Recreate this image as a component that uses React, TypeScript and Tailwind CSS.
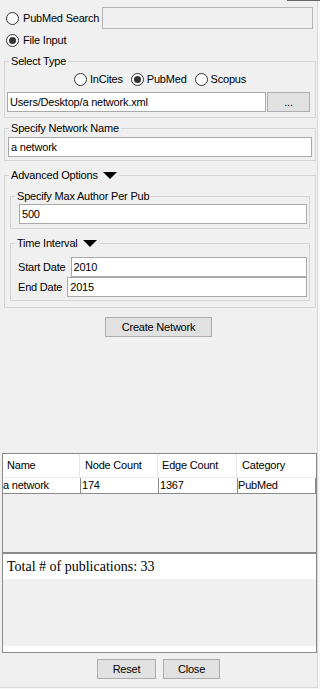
import React from "react";

function Radio({ checked }: { checked?: boolean }) {
  return (
    <span className="flex h-[13px] w-[13px] shrink-0 items-center justify-center rounded-full border border-[#333333] bg-white">
      {checked && <span className="h-[7px] w-[7px] rounded-full bg-[#333333]" />}
    </span>
  );
}

function RadioItem({ label, checked }: { label: string; checked?: boolean }) {
  return (
    <div className="flex items-center gap-[3px]">
      <Radio checked={checked} />
      <span>{label}</span>
    </div>
  );
}

function Tri() {
  return (
    <svg width="14" height="7" viewBox="0 0 14 7" className="shrink-0">
      <path d="M0 0 H14 L7 7 Z" fill="#000" />
    </svg>
  );
}

function Title({ text, tri }: { text: string; tri?: boolean }) {
  return (
    <div className="-mt-[8px] ml-[4px] flex h-[14px] w-fit items-center gap-[5px] bg-[#f0f0f0] px-[2px] leading-[14px]">
      <span>{text}</span>
      {tri && <Tri />}
    </div>
  );
}

function Field({ value, className }: { value: string; className: string }) {
  return (
    <div className={"flex h-[20px] items-center border border-[#a9a9a9] bg-white pl-[2px] " + className}>
      {value}
    </div>
  );
}

function Btn({ label, className }: { label: string; className: string }) {
  return (
    <div className={"flex h-[20px] items-center justify-center border border-[#adadad] bg-[#e1e1e1] " + className}>
      {label}
    </div>
  );
}

export default function App() {
  return (
    <div className="relative h-[689px] w-[320px] bg-[#f7f7f7] font-['Liberation_Sans',Arial,sans-serif] text-[11px] tracking-[-0.2px] text-black">
      <div className="absolute right-0 top-0 h-px w-[33px] bg-[#646464]" />
      <div className="flex h-[688px] w-[318px] flex-col border-b border-r border-[#dadada] bg-[#f0f0f0]">
        {/* PubMed Search */}
        <div className="mt-[7px] flex h-[22px] items-center pl-[6px]">
          <Radio />
          <span className="ml-[4px]">PubMed Search</span>
          <div className="ml-auto mr-[4px] h-[22px] w-[211px] border border-[#b4b4b4] bg-[#f0f0f0]" />
        </div>
        {/* File Input */}
        <div className="mt-[2px] flex h-[18px] items-center pl-[6px]">
          <Radio checked />
          <span className="ml-[4px]">File Input</span>
        </div>

        {/* Select Type */}
        <div className="ml-[4px] mt-[12px] w-[312px] border border-[#d5d5d5] pb-[5px]">
          <Title text="Select Type" />
          <div className="mt-[3px] flex h-[16px] items-center justify-center gap-[8px]">
            <RadioItem label="InCites" />
            <RadioItem label="PubMed" checked />
            <RadioItem label="Scopus" />
          </div>
          <div className="mt-[5px] flex h-[20px] gap-[1px] pl-[2px] pr-[5px]">
            <Field value="Users/Desktop/a network.xml" className="flex-1" />
            <Btn label="..." className="w-[43px]" />
          </div>
        </div>

        {/* Specify Network Name */}
        <div className="ml-[4px] mt-[10px] w-[312px] border border-[#d5d5d5] pb-[3px]">
          <Title text="Specify Network Name" />
          <Field value="a network" className="mx-[3px] mt-[2px]" />
        </div>

        {/* Advanced Options */}
        <div className="ml-[4px] mt-[14px] w-[312px] border border-[#d5d5d5] pb-[6px]">
          <Title text="Advanced Options" tri />
          <div className="mx-[5px] mt-[14px] border border-[#d5d5d5] pb-[4px]">
            <Title text="Specify Max Author Per Pub" />
            <Field value="500" className="ml-[8px] mr-[2px] mt-[1px]" />
          </div>
          <div className="mx-[5px] mt-[14px] border border-[#d5d5d5] pb-[3px]">
            <Title text="Time Interval" tri />
            <div className="mt-[7px] flex h-[20px] items-center gap-[5px] pl-[7px] pr-[2px]">
              <span>Start Date</span>
              <Field value="2010" className="flex-1" />
            </div>
            <div className="flex h-[20px] items-center gap-[5px] pl-[7px] pr-[2px]">
              <span>End Date</span>
              <Field value="2015" className="flex-1" />
            </div>
          </div>
        </div>

        <div className="mt-[9px] flex justify-center">
          <Btn label="Create Network" className="w-[107px]" />
        </div>

        {/* Table */}
        <div className="ml-[2px] mt-[116px] h-[100px] w-[315px] border border-[#8a8a8a] bg-[#f0f0f0]">
          <div className="flex h-[24px] border-b border-[#eaeaea] bg-white">
            <div className="flex w-[77px] items-center border-r border-[#e5e5e5] pl-[4px]">Name</div>
            <div className="flex w-[78px] items-center border-r border-[#e5e5e5] pl-[5px]">Node Count</div>
            <div className="flex w-[79px] items-center border-r border-[#e5e5e5] pl-[4px]">Edge Count</div>
            <div className="flex flex-1 items-center pl-[5px]">Category</div>
          </div>
          <div className="flex h-[16px] border-b border-[#8a8a8a] bg-white leading-[15px]">
            <div className="w-[77px]">a network</div>
            <div className="w-[78px] border-l border-[#8a8a8a] pl-[1px]">174</div>
            <div className="w-[79px] border-l border-[#8a8a8a] pl-[1px]">1367</div>
            <div className="flex-1 border-l border-r border-[#8a8a8a]">PubMed</div>
          </div>
        </div>

        {/* Text area */}
        <div className="ml-[2px] flex h-[100px] w-[315px] flex-col border border-[#8a8a8a] bg-[#f0f0f0]">
          <div className="flex h-[25px] items-center bg-white pl-[4px] font-['Liberation_Serif',serif] text-[14px] tracking-normal">
            Total # of publications: 33
          </div>
          <div className="flex-1" />
          <div className="h-[6px] bg-white" />
        </div>

        <div className="mt-[6px] flex justify-center gap-[7px]">
          <Btn label="Reset" className="w-[59px]" />
          <Btn label="Close" className="w-[57px]" />
        </div>
      </div>
    </div>
  );
}
